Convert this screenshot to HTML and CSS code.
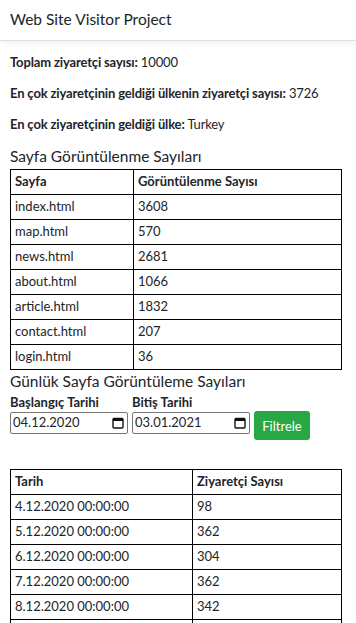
FILE: index.html
```html
<!DOCTYPE html>
<html>
<head>
  <meta charset="utf-8">
  <title>Web Site Visitor Project</title>
  <link rel="stylesheet" href="styles.css">
</head>
<body>
  <header class="navbar">
    <span class="brand">Web Site Visitor Project</span>
  </header>
  <main class="container">
    <p><b>Toplam ziyaretçi sayısı:</b> 10000</p>
    <p><b>En çok ziyaretçinin geldiği ülkenin ziyaretçi sayısı:</b> 3726</p>
    <p><b>En çok ziyaretçinin geldiği ülke:</b> Turkey</p>

    <h5>Sayfa Görüntülenme Sayıları</h5>
    <table class="pages">
      <tr><th>Sayfa</th><th>Görüntülenme Sayısı</th></tr>
      <tr><td>index.html</td><td>3608</td></tr>
      <tr><td>map.html</td><td>570</td></tr>
      <tr><td>news.html</td><td>2681</td></tr>
      <tr><td>about.html</td><td>1066</td></tr>
      <tr><td>article.html</td><td>1832</td></tr>
      <tr><td>contact.html</td><td>207</td></tr>
      <tr><td>login.html</td><td>36</td></tr>
    </table>

    <h5 class="daily">Günlük Sayfa Görüntüleme Sayıları</h5>
    <form class="filter">
      <div class="field">
        <label>Başlangıç Tarihi</label>
        <div class="date">
          <span>04.12.2020</span>
          <svg width="12" height="12" viewBox="0 0 12 12"><rect x="1" y="1.5" width="10" height="9.5" rx="1" fill="none" stroke="#111" stroke-width="1.4"/><rect x="1" y="1.5" width="10" height="2.5" fill="#111"/></svg>
        </div>
      </div>
      <div class="field">
        <label>Bitiş Tarihi</label>
        <div class="date">
          <span>03.01.2021</span>
          <svg width="12" height="12" viewBox="0 0 12 12"><rect x="1" y="1.5" width="10" height="9.5" rx="1" fill="none" stroke="#111" stroke-width="1.4"/><rect x="1" y="1.5" width="10" height="2.5" fill="#111"/></svg>
        </div>
      </div>
      <button type="button" class="btn">Filtrele</button>
    </form>

    <table class="daily-table">
      <tr><th>Tarih</th><th>Ziyaretçi Sayısı</th></tr>
      <tr><td>4.12.2020 00:00:00</td><td>98</td></tr>
      <tr><td>5.12.2020 00:00:00</td><td>362</td></tr>
      <tr><td>6.12.2020 00:00:00</td><td>304</td></tr>
      <tr><td>7.12.2020 00:00:00</td><td>362</td></tr>
      <tr><td>8.12.2020 00:00:00</td><td>342</td></tr>
      <tr><td>9.12.2020 00:00:00</td><td>318</td></tr>
    </table>
  </main>
</body>
</html>
```

FILE: styles.css
```css
html, body {
  margin: 0;
  padding: 0;
}

body {
  background: #fff;
  color: #212529;
  font-family: Lato, "Noto Sans", sans-serif;
  font-size: 13px;
  line-height: 1.5;
  overflow: hidden;
}

* {
  box-sizing: border-box;
}

.navbar {
  height: 41px;
  display: flex;
  align-items: center;
  padding: 0 10px;
  border-bottom: 1px solid #dedede;
  box-shadow: 0 3px 8px rgba(0, 0, 0, .05);
}

.brand {
  font-size: 15.5px;
  font-weight: 400;
  color: #212529;
}

.container {
  padding: 0 14px 0 10px;
}

p {
  margin: 12px 0 0;
  line-height: 19px;
  letter-spacing: -.15px;
}

p b {
  font-weight: 700;
}

h5 {
  font-size: 15.5px;
  font-weight: 400;
  line-height: 20px;
  margin: 12px 0 3px;
}

h5.daily {
  margin-top: 1px;
  margin-bottom: 2px;
}

table {
  width: 100%;
  border-collapse: collapse;
}

th, td {
  border: 1px solid #000;
  text-align: left;
  padding: 2px 4px;
  height: 25px;
}

th {
  font-weight: 700;
}

.pages th:first-child {
  width: 123px;
}

.daily-table {
  margin-top: 29px;
}

.daily-table th:first-child {
  width: 182px;
}

.filter {
  display: flex;
  align-items: flex-start;
  gap: 4px;
}

.field label {
  display: block;
  font-weight: 700;
  line-height: 19px;
}

.date {
  width: 118px;
  height: 22px;
  border: 1px solid #767676;
  border-radius: 2px;
  display: flex;
  align-items: center;
  justify-content: space-between;
  padding: 0 3px 0 2px;
}

.date svg {
  display: block;
}

.btn {
  margin-top: 18px;
  width: 56px;
  height: 29px;
  border: 0;
  border-radius: 3px;
  background: #28a745;
  color: #fff;
  font-family: inherit;
  font-size: 13px;
  padding: 0;
}
```
